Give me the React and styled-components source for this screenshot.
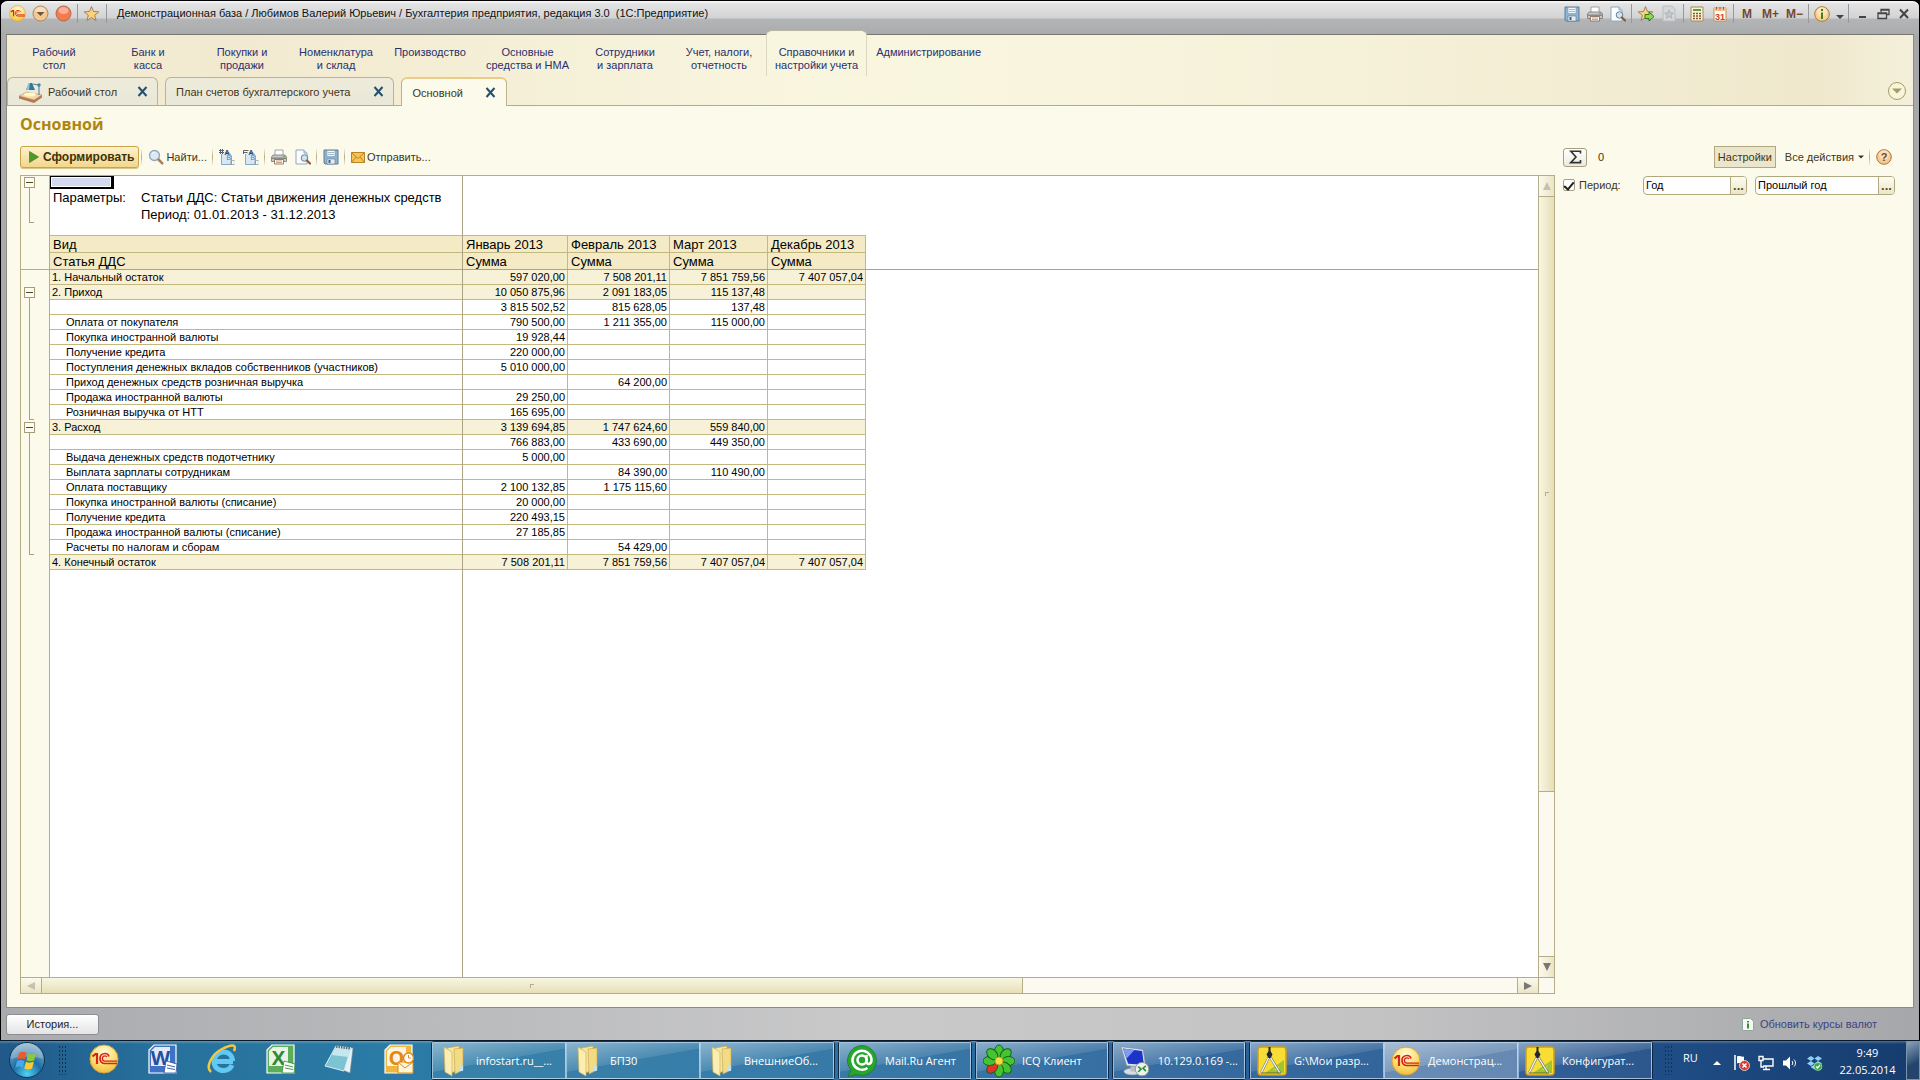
import React from 'react'
import styled, { createGlobalStyle, css } from 'styled-components'

const GlobalStyle = createGlobalStyle`
* {
  box-sizing: border-box;
}

body {
  margin: 0;
  font-family: "Liberation Sans", Arial, sans-serif;
  font-size: 11px;
  color: #3f3618;
}

button, input {
  font: inherit;
  color: inherit;
  margin: 0;
}
`

const Page = styled.div`
min-height: 100vh;
display: flex;
flex-direction: column;
background: #000;
`

const Window = styled.div`
flex: 1;
display: flex;
flex-direction: column;
margin: 1px 1px 0;
padding: 0 5px;
border-top: 2px solid #f2f2f2;
border-radius: 6px 6px 0 0;
background: linear-gradient(#e4e4e5, #d2d3d4 15px, #b4b5b7 16px, #a9aaac 32px, transparent 33px),
  linear-gradient(90deg, #a9abae, #c9c9ca 45%, #c4c4c5 70%, #a6a7aa);
`

const TitleBar = styled.header`
height: 31px;
display: flex;
align-items: flex-start;
padding: 1px 0 0 2px;
`

const TitleGroup = styled.div`
height: 19px;
display: flex;
align-items: center;
gap: ${({ gap }) => gap || 7}px;
padding: 0 ${({ end, pad }) => end === undefined ? pad || 5 : end}px 0 ${({ pad }) => pad || 5}px;
border-right: ${({ last }) => last ? 'none' : '1px solid #97989b'};
`

const TitleText = styled.div`
flex: 1;
padding-left: 10px;
font-size: 11px;
line-height: 18px;
color: #111;
white-space: pre;
`

const IconButton = styled.button`
min-width: 16px;
height: 18px;
display: flex;
align-items: center;
justify-content: center;
padding: ${({ low }) => low ? 6 : 0}px 0 0;
border: 0;
background: none;
`

const MemoryButton = styled(IconButton)`
font-size: 12px;
font-weight: bold;
color: #75472c;
`

const Client = styled.main`
flex: 1;
display: flex;
flex-direction: column;
border: 1px solid #8f8c7c;
border-top-color: #77776f;
background: #fcfaea;
`

const Ribbon = styled.div`
background: linear-gradient(90deg, #f3edd3, #f2ead0 12%, #f9f6e0 45%, #f6f1d9 70%, #efe8cd 95%, #f5f0db);
border-bottom: 1px solid #b5ad80;
height: 71px;
display: flex;
flex-direction: column;
justify-content: space-between;
`

const Sections = styled.nav`
display: flex;
height: 41px;
`

const Section = styled.a`
min-width: 94px;
height: 46px;
margin-top: -5px;
padding: 15px 8px 0;
border: 1px solid transparent;
border-bottom: 0;
line-height: 13px;
text-align: center;
text-decoration: none;
color: #28306e;
white-space: pre-line;

${({ $active }) => $active && css`
  border-radius: 6px 6px 0 0;
  border-color: #b9b7a4 #dcd9c2;
  background: linear-gradient(#f9f6e0, #f8f5de);
`}
`

const TabRow = styled.div`
display: flex;
align-items: flex-end;
gap: 7px;
padding-right: 7px;
`

const Tab = styled.div`
height: ${({ $active }) => $active ? 29 : 28}px;
margin-bottom: ${({ $active }) => $active ? -1 : 0}px;
display: flex;
align-items: center;
gap: ${({ gap }) => gap}px;
padding: 0 7px 0 10px;
border: 1px solid #b9b38f;
border-top-color: ${({ $active }) => $active ? '#eccb86' : '#b9b38f'};
border-top-width: ${({ $active }) => $active ? 2 : 1}px;
border-bottom: 0;
border-radius: 6px 6px 0 0;
background: ${({ $active }) => $active ? '#fcfaea' : 'linear-gradient(#eeebd9, #e9e8d9)'};
`

const TabLabel = styled.a`
display: flex;
align-items: center;
gap: 4px;
color: #3f3618;
text-decoration: none;
`

const TabSpacer = styled.div`
flex: 1;
`

const RoundButton = styled.button`
width: 18px;
height: 18px;
margin-bottom: 5px;
padding: 0;
display: flex;
align-items: center;
justify-content: center;
border: 1px solid #a59c62;
border-radius: 50%;
background: #f9f5da;
`

const Content = styled.div`
flex: 1;
display: flex;
flex-direction: column;
padding: 8px 18px 13px 13px;
`

const Heading = styled.h1`
margin: 0 0 12px;
font: bold 16px/20px "Open Sans", sans-serif;
color: #b0850f;
`

const Body = styled.div`
flex: 1;
display: flex;
gap: 8px;
`

const ReportPane = styled.section`
flex: 1;
min-width: 0;
display: flex;
flex-direction: column;
`

const Toolbar = styled.div`
height: 22px;
margin-bottom: 7px;
display: flex;
align-items: center;
`

const Separator = styled.div`
width: 1px;
height: 18px;
margin: 0 6px 0 ${({ left }) => left || 5}px;
background: linear-gradient(transparent, #b3ab86, transparent);
`

const RunButton = styled.button`
height: 22px;
padding: 0 4px 0 8px;
display: flex;
align-items: center;
gap: 4px;
border: 1px solid #c8a548;
border-radius: 3px;
background: linear-gradient(#fdf1cd, #f2d78c);
font-size: 12px;
font-weight: bold;
color: #3f3206;
box-shadow: 0 1px 0 #d9c58a;
`

const ToolButton = styled.button`
height: 20px;
display: flex;
align-items: center;
gap: 2px;
padding: 0;
border: 0;
background: none;
`

const MenuButton = styled(ToolButton)`
gap: 4px;
`

const ToolGap = styled.div`
width: ${({ size }) => size || 8}px;
`

const Sheet = styled.div`
flex: 1;
display: grid;
grid-template-columns: 29px minmax(0, 1fr) 16px;
grid-template-rows: minmax(0, 1fr) 16px;
border: 1px solid #b5ad88;
`

const Gutter = styled.div`
border-right: 1px solid #b5ad88;
background: #fcfaea;
`

const GutterHead = styled.div`
height: 94px;
margin-bottom: 16px;
border-bottom: 1px solid #b5ad88;
`

const OutlineGroup = styled.div`
height: ${({ size }) => size}px;
margin-bottom: 1px;
display: flex;
flex-direction: column;
`

const OutlineToggle = styled.button`
width: 11px;
height: 11px;
margin: 1px 0 0 3px;
padding: 0;
display: flex;
align-items: center;
justify-content: center;
border: 1px solid #a49d78;
background: #fffdf2;

&::before {
  content: '';
  width: 7px;
  height: 1px;
  background: #4c4522;
}
`

const OutlineLine = styled.div`
flex: 1;
width: 5px;
margin-left: 8px;
border: solid #a8a180;
border-width: 0 0 1px 1px;
`

const Cells = styled.div`
position: relative;
background: #fff;
color: #000;
`

const FreezeColumn = styled.div`
position: absolute;
top: 0;
bottom: 0;
left: 412px;
width: 1px;
background: #aaa384;
`

const FreezeRow = styled.div`
position: absolute;
left: 0;
right: 0;
top: 93px;
height: 1px;
background: #aaa384;
`

const SelectedCell = styled.div`
width: 64px;
height: 13px;
border: solid #000;
border-width: 1px 3px 2px 1px;
background: #d3d9ee;
box-shadow: inset 0 0 0 1px #fff;
`

const Params = styled.dl`
height: 46px;
margin: 0;
padding-left: 3px;
display: grid;
grid-template-columns: 88px 1fr;
grid-auto-rows: 17px;
font-size: 13px;
line-height: 17px;
`

const ParamValue = styled.dd`
margin: 0;
grid-column: 2;
`

const ReportTable = styled.table`
width: 816px;
table-layout: fixed;
border-collapse: separate;
border-spacing: 0;
border-top: 1px solid #c3b87e;
`

const HeadCell = styled.th`
height: 17px;
padding: 1px 0 0 3px;
border: solid #c3b87e;
border-width: 0 1px 1px 0;
background: #f4ebc6;
font-size: 13px;
font-weight: normal;
line-height: 15px;
text-align: left;
white-space: nowrap;
`

const Row = styled.tr`
background: ${({ $total }) => $total ? '#f7f1d8' : '#fff'};
`

const NameCell = styled.td`
height: 15px;
padding: 0 0 0 ${({ $nested }) => $nested ? 16 : 2}px;
border: solid #c3b87e;
border-width: 0 1px 1px 0;
line-height: 14px;
white-space: nowrap;
`

const SumCell = styled(NameCell)`
padding: 0 2px 0 0;
text-align: right;
`

const VScroll = styled.div`
display: flex;
flex-direction: column;
border-left: 1px solid #b5ad88;
background: #fbf9f0;
`

const HScroll = styled.div`
grid-column: 1 / 3;
display: flex;
border-top: 1px solid #b5ad88;
background: #fbf9f0;
`

const Corner = styled.div`
border: solid #b5ad88;
border-width: 1px 0 0 1px;
background: #fbf9f0;
`

const ScrollButton = styled.button`
flex: 0 0 20px;
padding: 0;
display: flex;
align-items: center;
justify-content: center;
border: 0;
background: ${({ $side }) => $side ? 'linear-gradient(#fbf9ec, #ebe5c6)' : 'linear-gradient(90deg, #fbf9ec, #ebe5c6)'};
`

const VThumb = styled.div`
flex: 596;
border: solid #b5ad88;
border-width: 1px 0;
background: linear-gradient(90deg, #f9f6e2, #e6dfb8);
display: flex;
align-items: center;
justify-content: center;
`

const HThumb = styled.div`
flex: 981;
border: solid #b5ad88;
border-width: 0 1px;
background: linear-gradient(#f9f6e2, #e6dfb8);
display: flex;
align-items: center;
justify-content: center;
`

const Grip = styled.div`
width: 4px;
height: 4px;
border: solid #b5ad88;
border-width: 1px 0 0 1px;
`

const VTrack = styled.div`
flex: 164;
border-bottom: 1px solid #b5ad88;
`

const HTrack = styled.div`
flex: 495;
border-right: 1px solid #b5ad88;
`

const SettingsPane = styled.aside`
width: 332px;
`

const SumButton = styled.button`
width: 24px;
height: 19px;
padding: 0;
display: flex;
align-items: center;
justify-content: center;
border: 1px solid #a69f86;
border-radius: 3px;
background: linear-gradient(#fff, #eceadd);
`

const SumValue = styled.output`
flex: 1;
padding-left: 11px;
`

const SettingsButton = styled.button`
width: 62px;
height: 22px;
margin-right: 9px;
padding: 0;
border: 1px solid #b0a97f;
background: #ebe6cb;
`

const Filter = styled.div`
display: flex;
align-items: center;
gap: 8px;
height: 20px;
`

const PeriodLabel = styled.label`
width: 72px;
display: flex;
align-items: center;
gap: 4px;
`

const CheckBox = styled.input`
appearance: none;
width: 12px;
height: 12px;
border: 1px solid #a69f86;
border-radius: 2px;
background: #fff;
display: flex;
justify-content: center;

&:checked::before {
  content: '';
  width: 4px;
  height: 8px;
  border: solid #222;
  border-width: 0 2px 2px 0;
  transform: rotate(40deg);
}
`

const Field = styled.div`
flex: 0 0 ${({ size }) => size}px;
height: 19px;
display: flex;
border: 1px solid #b0a97f;
border-radius: 4px;
background: #fff;
overflow: hidden;
`

const FieldInput = styled.input`
flex: 1;
min-width: 0;
padding: 0 2px;
border: 0;
background: none;
color: #000;
outline: none;
`

const FieldButton = styled.button`
width: 16px;
padding: 0;
border: 0;
border-left: 1px solid #b0a97f;
background: linear-gradient(#fdfcf2, #ebe6cb);
font-size: 13px;
font-weight: bold;
line-height: 17px;
color: #5c4f14;
`

const StatusBar = styled.footer`
height: 32px;
display: flex;
align-items: center;
justify-content: space-between;
padding-right: 37px;
`

const HistoryButton = styled.button`
width: 93px;
height: 21px;
border: 1px solid #8d8e90;
border-radius: 3px;
background: linear-gradient(#fff, #e4e4e6);
color: #222;
`

const StatusLink = styled.a`
display: flex;
align-items: center;
gap: 6px;
color: #3c4384;
text-decoration: none;
`

const Taskbar = styled.footer`
height: 40px;
display: flex;
border-top: 1px solid #0b1a2a;
background: linear-gradient(rgba(255, 255, 255, 0.25), rgba(255, 255, 255, 0) 3px),
  linear-gradient(90deg, #20598a, #27709c 8%, #2a7ba5 20%, #2b74a4 40%, #2a649b 60%, #235590 80%, #163c6e);
font-family: "Open Sans", sans-serif;
font-size: 11px;
color: #fff;
`

const StartButton = styled.button`
width: 54px;
padding: 0;
border: 0;
background: none;
`

const Dots = styled.div`
width: 9px;
height: 30px;
margin: 4px 0 0 ${({ left }) => left}px;
background: radial-gradient(circle, #0d3552 1px, transparent 1px) 0 0 / 3px 4px;
`

const QuickLaunch = styled.div`
display: flex;
align-items: center;
padding: 0 3px 0 7px;
`

const LaunchButton = styled.button`
width: 59px;
height: 36px;
padding: 0;
border: 0;
background: none;
`

const TaskGroup = styled.div`
display: flex;
margin-right: 3px;
border: 1px solid rgba(10, 25, 45, 0.8);
border-radius: 3px;
`

const TaskButton = styled.button`
width: ${({ size }) => size || 132}px;
display: flex;
align-items: center;
gap: 7px;
padding: 0 6px;
border: 1px solid rgba(220, 235, 250, 0.6);
background: ${({ $active }) => $active
    ? 'linear-gradient(170deg, rgba(255,255,255,.6), rgba(255,255,255,.4) 50%, rgba(255,255,255,.3) 51%)'
    : 'linear-gradient(170deg, rgba(255,255,255,.45), rgba(255,255,255,.16) 49%, rgba(255,255,255,.06) 50%)'};
white-space: nowrap;
text-align: left;
`

const Tray = styled.div`
flex: 1;
display: flex;
align-items: center;
`

const TrayIcons = styled.div`
display: flex;
align-items: center;
gap: 8px;
margin: 4px 0 0 10px;
`

const TrayArrow = styled.div`
width: 12px;
display: flex;
`

const Language = styled.div`
width: 20px;
margin-left: 10px;
padding-bottom: 6px;
`

const Clock = styled.time`
flex: 1;
padding: 1px 0 0 6px;
line-height: 17px;
text-align: center;
`

const ShowDesktop = styled.button`
width: 14px;
height: 39px;
border: 1px solid #7d93ab;
background: linear-gradient(150deg, #8ba2bb, #23456c 60%);
`

/* icons */

const DiskIcon = () => (
  <svg width='16' height='16' viewBox='0 0 16 16'>
    <path d='M1 1h14v14H2l-1-1z' fill='#8fb4cf' stroke='#5c7d98' />
    <path d='M4 1.500h8v6H4z' fill='#f4f8fb' stroke='#7d98ad' strokeWidth='.6' />
    <path d='M5 3.500h6M5 5.500h6' stroke='#a5bac9' />
    <path d='M4 10h8v5H4z' fill='#e5edf2' stroke='#5c7d98' strokeWidth='.6' />
    <path d='M5.500 11h2v3h-2z' fill='#41617c' />
  </svg>
)

const PrinterIcon = () => (
  <svg width='16' height='16' viewBox='0 0 16 16'>
    <path d='M4 1h8v6H4z' fill='#fff' stroke='#8b9097' strokeWidth='.8' />
    <path d='M2 6h12l1.500 2v4.500h-15V8z' fill='#c9c8c6' stroke='#7a7673' strokeWidth='.8' />
    <path d='M1 8.500h14v1.500H1z' fill='#8d8783' />
    <path d='M12 7h2v1h-2z' fill='#67b04c' />
    <path d='M3.500 10.500h9v4.500h-9z' fill='#fbfbfb' stroke='#7c6657' strokeWidth='.8' />
    <path d='M5 12h6M5 13.500h6' stroke='#c88e60' strokeWidth='.8' />
  </svg>
)

const PreviewIcon = () => (
  <svg width='16' height='16' viewBox='0 0 16 16'>
    <path d='M1 1h8l3 3v11H1z' fill='#fbfdff' stroke='#8ba9c1' />
    <path d='M9 1v3h3' fill='#d4e3ef' stroke='#8ba9c1' />
    <circle cx='9.500' cy='9' r='3.300' fill='#cfe2f0' stroke='#6a7f90' />
    <path d='M12 11.500l3 3' stroke='#8a5a3c' strokeWidth='2.200' strokeLinecap='round' />
  </svg>
)

const StarIcon = ({ arrow, pale }) => (
  <svg width='18' height='17' viewBox='0 0 18 17'>
    {pale && <path d='M3 1h9l3 3v12H3z' fill='#d5d7d9' stroke='#b8bdc2' />}
    <path
      d='M8.500 1.500l2 5 5.300.4-4.100 3.400 1.400 5.200-4.600-2.900-4.500 2.900 1.300-5.200L1.200 6.900l5.300-.4z'
      transform={pale ? 'translate(4 4) scale(.6)' : undefined}
      fill={pale ? '#c3c8cc' : '#fbd27c'}
      stroke={pale ? '#9aa2a9' : '#9c8163'}
    />
    {arrow && <path d='M8 9.500h4V7l5 4.500-5 4.500v-2.500H8z' fill='#8ddb58' stroke='#357a1e' />}
  </svg>
)

const CalcIcon = () => (
  <svg width='14' height='16' viewBox='0 0 14 16'>
    <path d='M1 1h12v14H1z' fill='#fbf3d4' stroke='#a08a5a' />
    <path d='M3 3h8v2H3z' fill='#5f9a46' />
    <path d='M3 7.500h8M3 10h8M3 12.500h8' stroke='#8a5136' strokeWidth='1.500' strokeDasharray='2 1' />
  </svg>
)

const CalendarIcon = () => (
  <svg width='14' height='16' viewBox='0 0 14 16'>
    <path d='M1 2h12v13H1z' fill='#fffaf0' stroke='#c58f56' />
    <path d='M1 2h12v3H1z' fill='#eec193' />
    <path d='M3.500 1v2.500M7 1v2.500M10.500 1v2.500' stroke='#8f5b2b' />
    <text x='7' y='13.500' fontSize='9' fontWeight='bold' fontFamily='Liberation Sans' textAnchor='middle' fill='#d6401c'>31</text>
  </svg>
)

const InfoIcon = () => (
  <svg width='16' height='16' viewBox='0 0 16 16'>
    <circle cx='8' cy='8' r='7.300' fill='#f8d28a' stroke='#a7793f' />
    <circle cx='8' cy='6' r='5' fill='#fff' opacity='.4' />
    <path d='M7 3h2v2H7zM7 6.500h2V13H7z' fill='#4c7a21' />
  </svg>
)

const HelpIcon = () => (
  <svg width='16' height='16' viewBox='0 0 16 16'>
    <circle cx='8' cy='8' r='7.300' fill='#f8c98a' stroke='#a7744a' />
    <circle cx='8' cy='6' r='5' fill='#fff' opacity='.4' />
    <text x='8' y='12' fontSize='11' fontWeight='bold' fontFamily='Liberation Sans' textAnchor='middle' fill='#6b4a2c'>?</text>
  </svg>
)

const OneCIcon = ({ size }) => (
  <svg width={size} height={size} viewBox='0 0 30 30'>
    <defs>
      <radialGradient id='oneC' cx='50%' cy='25%' r='80%'>
        <stop offset='0' stopColor='#fffbd8' />
        <stop offset='.6' stopColor='#fbdc6a' />
        <stop offset='1' stopColor='#f0b93a' />
      </radialGradient>
    </defs>
    <circle cx='15' cy='15' r='14' fill='url(#oneC)' stroke='#d9a33c' />
    <path d='M3.500 12.500l3-2.500h1.500v10' fill='none' stroke='#d8231b' strokeWidth='2.200' />
    <path d='M20 12.500c-.5-2-2-3-4-3-3 0-5 2.200-5 5s2 5 5 5h12' fill='none' stroke='#d8231b' strokeWidth='1.700' />
    <path d='M18 13c-.5-.8-1-1.200-2-1.200-1.600 0-2.600 1.200-2.600 2.700s1 2.600 2.600 2.600h12' fill='none' stroke='#d8231b' strokeWidth='1.300' />
  </svg>
)

const RoundIcon = ({ color, edge, arrow }) => (
  <svg width='17' height='17' viewBox='0 0 17 17'>
    <circle cx='8.500' cy='8.500' r='7.500' fill={color} stroke={edge} />
    <ellipse cx='8.500' cy='5.500' rx='5' ry='3.500' fill='#fff' opacity='.4' />
    {arrow && <path d='M4.500 7h8l-4 4z' fill='#6d5440' />}
  </svg>
)

const Triangle = ({ dir, color = '#777', size = 8 }) => {
  const shapes = {
    up: 'M4 0l4 8H0z',
    down: 'M0 0h8L4 8z',
    left: 'M8 0v8L0 4z',
    right: 'M0 0l8 4-8 4z',
    flat: 'M0 2h8L4 6z',
    caret: 'M0 6h8L4 2z'
  }
  return (
    <svg width={size} height={size} viewBox='0 0 8 8'>
      <path d={shapes[dir]} fill={color} />
    </svg>
  )
}

const CloseIcon = () => (
  <svg width='11' height='11' viewBox='0 0 11 11'>
    <path d='M1.500 1l8 9M9.500 1l-8 9' stroke='#23506e' strokeWidth='2' />
  </svg>
)

const DeskIcon = () => (
  <svg width='26' height='22' viewBox='0 0 26 22'>
    <path d='M1 15l8-4 15 3-8 5z' fill='#f3d7a8' stroke='#c18d5c' strokeWidth='.6' />
    <path d='M1 15l15 4v3L1 17.500zM16 19l8-5v2.500L16 22z' fill='#b67a52' />
    <ellipse cx='12' cy='13.500' rx='6' ry='2' fill='#fffbc9' />
    <path d='M8 9l3-7h3l3 7z' fill='#2d7a9c' />
    <path d='M8 9l3-7h1l-1 7z' fill='#8ac4da' />
    <path d='M14 3l7 1v10' fill='none' stroke='#5e8ba1' strokeWidth='1.200' />
    <circle cx='21' cy='4' r='1.700' fill='#3f86a8' />
  </svg>
)

const SearchIcon = () => (
  <svg width='16' height='16' viewBox='0 0 16 16'>
    <circle cx='6.500' cy='6.500' r='5' fill='#d9e9f5' stroke='#93a6bb' strokeWidth='1.300' />
    <path d='M4 5c.5-1.200 1.500-1.800 2.500-1.800' stroke='#fff' fill='none' />
    <path d='M10.500 10.500l3.800 3.800' stroke='#a4805f' strokeWidth='2.500' strokeLinecap='round' />
  </svg>
)

const LettersIcon = ({ outline }) => (
  <svg width='16' height='16' viewBox='0 0 16 16'>
    <path d='M2.500 5V15.500h10V7L10 3.500H6' fill='#d6e8f5' stroke='#86aac4' />
    <path d={outline ? 'M.5 5V1.500h5M.5 3.500h4' : 'M0 1.500h5M0 3.500h5M1.500 0v5M3.500 0v5'} stroke='#59636b' fill='none' />
    <text x='5.500' y='6' fontSize='7' fontWeight='bold' fontFamily='Liberation Sans' fill='#1e4a70'>A</text>
    <text x='7.500' y='11' fontSize='7' fontFamily='Liberation Sans' fill='#55809c'>B</text>
    <text x='11' y='16' fontSize='7' fontFamily='Liberation Sans' fill='#7c8b95'>C</text>
  </svg>
)

const MailIcon = () => (
  <svg width='14' height='11' viewBox='0 0 14 11'>
    <path d='M.5.5h13v10H.5z' fill='#f8c455' stroke='#b98428' />
    <path d='M.5.5L7 6.500 13.500.5M.5 10.500L5 5M13.500 10.500L9 5' fill='none' stroke='#b98428' />
  </svg>
)

const SigmaIcon = () => (
  <svg width='13' height='14' viewBox='0 0 13 14'>
    <path d='M11.500 3.500V1.200H1.800L7 7l-5.200 5.600h9.700V10' fill='none' stroke='#333' strokeWidth='1.600' />
  </svg>
)

const WindowIcon = ({ kind }) => (
  <svg width='13' height='12' viewBox='0 0 13 12'>
    {kind === 'min' && <path d='M3 9h7' stroke='#444' strokeWidth='2' />}
    {kind === 'restore' && <path d='M4 4V1.500h8v5H9.500M1 5h8.500v5.500H1zM1 5.500h8M4 2h8' fill='none' stroke='#444' strokeWidth='1.300' />}
    {kind === 'close' && <path d='M2 1.500l8 8.500M10 1.500L2 10' stroke='#444' strokeWidth='2' />}
  </svg>
)

const NoteIcon = () => (
  <svg width='12' height='13' viewBox='0 0 12 13'>
    <path d='M.5.5h8l3 3v9H.5z' fill='#f4faf3' stroke='#92a79b' />
    <path d='M5 3h2v1.500H5zM5 5.500h2v5H5z' fill='#3f8a33' />
  </svg>
)

const StartOrb = () => (
  <svg width='38' height='38' viewBox='0 0 38 38'>
    <defs>
      <radialGradient id='orb' cx='50%' cy='90%' r='90%'>
        <stop offset='0' stopColor='#4fd2f5' />
        <stop offset='.45' stopColor='#1c6fa5' />
        <stop offset='1' stopColor='#8fb4cc' />
      </radialGradient>
    </defs>
    <circle cx='19' cy='19' r='17.500' fill='url(#orb)' stroke='#12354f' />
    <path d='M3 18a16 16 0 0 1 32 0c-8-3-22-3-32 0z' fill='#fff' opacity='.25' />
    <path d='M11 12c3-1.800 5-1.500 7.500-.3l-1.700 6.800c-2.500-1.200-5-1.300-7.500.2z' fill='#ee5a2c' />
    <path d='M20 12.500c2.500 1.300 5 1.300 8-.3l-1.800 7c-2.700 1.400-5.200 1.300-7.800 0z' fill='#8cc83c' />
    <path d='M9 20c2.800-1.500 5-1.300 7.500-.2l-1.700 6.700c-2.500-1.200-5-1.200-7.500.2z' fill='#48a8e8' />
    <path d='M18 20.800c2.500 1.200 5 1.200 7.900-.2l-1.800 6.900c-2.800 1.400-5.200 1.300-7.800 0z' fill='#fcc92e' />
  </svg>
)

const OfficeIcon = ({ letter, color, edge }) => (
  <svg width='30' height='30' viewBox='0 0 30 30'>
    <path d='M6 1h22v28H1V6z' fill={edge} stroke='#fff' strokeWidth='1.200' />
    <path d='M7 3h15v19H3V7z' fill='#fff' opacity='.85' />
    <text x='12.500' y='21' fontSize='20' fontWeight='bold' fontFamily='Open Sans' textAnchor='middle' fill={color}>{letter}</text>
    {letter === 'O'
      ? <g><path d='M14 18h15v11H14z' fill='#fff6d8' stroke={color} /><path d='M14 18l7 6 8-6' fill='none' stroke={color} /><circle cx='24.500' cy='14' r='5' fill='#fff' stroke={color} strokeWidth='1.500' /><path d='M24.500 11v3h2.500' fill='none' stroke={color} /></g>
      : <g><path d='M18 17l11 3-1 9H16z' fill='#fff' stroke={color} strokeWidth='.8' /><path d='M19 21l8 2M19 24l8 1.500' stroke={color} strokeWidth='.9' /></g>}
  </svg>
)

const ExplorerIcon = () => (
  <svg width='32' height='32' viewBox='0 0 32 32'>
    <path d='M27 18.500H9M26.500 18c0-5.500-4-9-9-9s-9.500 4-9.500 9.500 4 9 9.500 9c4 0 7-2 8.500-5.500' fill='none' stroke='#62c9f3' strokeWidth='5' />
    <path d='M5 29C-1 24 6 11 16 6S31 1 28 8' fill='none' stroke='#f4ca3a' strokeWidth='2.500' />
  </svg>
)

const NotepadIcon = () => (
  <svg width='32' height='30' viewBox='0 0 32 30'>
    <path d='M12 2l17 2-3 25-5-2z' fill='#e8f1f3' stroke='#7b8e96' strokeWidth='.6' />
    <path d='M12 2l15 2-7 23L1 22z' fill='#7cc3d4' stroke='#d8eef2' />
    <path d='M12 2l15 2-3 9L8 11z' fill='#c5e8ef' />
    <path d='M12 2.500l15 2' stroke='#5d6b70' strokeWidth='2.500' strokeDasharray='1.500 1' />
  </svg>
)

const FolderIcon = () => (
  <svg width='30' height='34' viewBox='0 0 30 34'>
    <path d='M8 4l12-2v24l-8 3z' fill='#f6e6a0' stroke='#c9ab50' strokeWidth='.7' />
    <path d='M15 5l9-1v22l-8 4z' fill='#f3da85' stroke='#c9ab50' strokeWidth='.7' />
    <path d='M5 3l8 5v24l-7-4z' fill='#fbeeb0' stroke='#cfb25a' strokeWidth='.7' />
    <path d='M21 22h3v5h-3z' fill='#bfe2f5' />
  </svg>
)

const MailRuIcon = () => (
  <svg width='32' height='34' viewBox='0 0 32 34'>
    <path d='M16 1.500a15 15 0 1 1-6 29L2 32.500l3-6.500A15 15 0 0 1 16 1.500z' fill='#27a52f' stroke='#16761d' strokeWidth='.7' />
    <circle cx='16' cy='16' r='4.500' fill='none' stroke='#fff' strokeWidth='2.500' />
    <path d='M20.500 11v6.500c0 4 5 3 5-1.500a9.500 9.500 0 1 0-4 8' fill='none' stroke='#fff' strokeWidth='2.500' />
  </svg>
)

const IcqIcon = () => (
  <svg width='32' height='34' viewBox='0 0 32 34'>
    {[0, 45, 90, 135, 180, 225, 270, 315].map(angle => (
      <ellipse
        key={angle}
        cx='16'
        cy='7.500'
        rx='4.500'
        ry='6.500'
        transform={`rotate(${angle} 16 17)`}
        fill={angle === 225 ? '#e2322b' : '#45c331'}
        stroke='#14631a'
      />
    ))}
    <circle cx='16' cy='17' r='4' fill='#fbd843' stroke='#a88516' strokeWidth='.6' />
  </svg>
)

const RemoteIcon = () => (
  <svg width='32' height='34' viewBox='0 0 32 34'>
    <ellipse cx='13' cy='28' rx='9' ry='3.500' fill='#d8dde2' stroke='#8c97a0' strokeWidth='.6' />
    <path d='M11 22h6v6h-6z' fill='#b6bfc6' />
    <path d='M1 2l23 3 3 18-20-1z' fill='#dfe6ec' stroke='#7f8b95' strokeWidth='.6' />
    <path d='M3 4l20 2.500 2 14.500-16.500-1z' fill='#1c35c8' />
    <path d='M3 4l12 1.500-8 9z' fill='#7f9bf0' />
    <circle cx='23' cy='25.500' r='7' fill='#eef1ee' stroke='#8d9a90' />
    <path d='M19 23l3 2.500-3 3M27 22l-3 2.500 3 3' fill='none' stroke='#2f8f3c' strokeWidth='1.700' />
  </svg>
)

const CompassIcon = () => (
  <svg width='30' height='32' viewBox='0 0 30 32'>
    <rect x='1' y='2' width='28' height='28' rx='3' fill='#f8dd35' stroke='#cf9d1d' strokeWidth='1.500' />
    <path d='M27 15v13H8z' fill='#9dc534' />
    <path d='M22 21v4h-5z' fill='#f8dd35' />
    <path d='M12.500 11L4 28M12.500 11L23 28' stroke='#6b6f73' strokeWidth='2.400' />
    <path d='M12.500 11L4 28M12.500 11L23 28' stroke='#f4f5f6' strokeWidth='1.400' />
    <path d='M4 28h20' stroke='#4b5524' strokeWidth='.8' />
    <path d='M11.500 2h2v4l2 3.500-2 3.500h-2l-2-3.500 2-3.500z' fill='#24282c' />
  </svg>
)

const FlagIcon = () => (
  <svg width='17' height='17' viewBox='0 0 17 17'>
    <path d='M2 1v15' stroke='#fff' strokeWidth='1.500' />
    <path d='M4 2.500c3-1.500 4 1 7 0v7c-3 1-4-1.500-7 0z' fill='#fff' />
    <circle cx='11.500' cy='11.500' r='5' fill='#dc3a2f' stroke='#fff' strokeWidth='.7' />
    <path d='M9.500 9.500l4 4M13.500 9.500l-4 4' stroke='#fff' strokeWidth='1.600' />
  </svg>
)

const NetworkIcon = () => (
  <svg width='16' height='16' viewBox='0 0 16 16'>
    <path d='M5 4h10v7H5M8 11v3M5 14.500h7M1 1.500h4v4H1zM3 5.500V12h3' fill='none' stroke='#fff' strokeWidth='1.400' />
  </svg>
)

const SoundIcon = () => (
  <svg width='16' height='16' viewBox='0 0 16 16'>
    <path d='M1 5.500h3l4-4v13l-4-4H1z' fill='#fff' />
    <path d='M10 6c1 1.200 1 2.800 0 4M12 4.500c2 2.200 2 4.800 0 7' fill='none' stroke='#fff' />
  </svg>
)

const DropboxIcon = () => (
  <svg width='17' height='16' viewBox='0 0 17 16'>
    <path d='M5 1l3.500 2.500L5 6 1 3.500zM12 1l4 2.500L12 6 8.500 3.500zM5 6l3.500 2.500L5 11 1 8.500zM12 6l4 2.500-4 2.500-3.500-2.500zM4.500 12l4-2.500 4 2.500-4 2.500z' fill='#8fd0f7' />
    <circle cx='12' cy='11.500' r='4' fill='#39a744' stroke='#c9efc9' strokeWidth='.6' />
    <path d='M10 11.500l1.500 1.500 2.500-3' fill='none' stroke='#fff' strokeWidth='1.300' />
  </svg>
)

const PlayIcon = () => (
  <svg width='10' height='12' viewBox='0 0 10 12'>
    <path d='M.5.5L9.500 6l-9 5.500z' fill='#4a9a2c' stroke='#2f6e1c' strokeWidth='.6' />
  </svg>
)

/* data */

const sections = [
  'Рабочий\nстол',
  'Банк и\nкасса',
  'Покупки и\nпродажи',
  'Номенклатура\nи склад',
  'Производство',
  'Основные\nсредства и НМА',
  'Сотрудники\nи зарплата',
  'Учет, налоги,\nотчетность',
  'Справочники и\nнастройки учета',
  'Администрирование'
]

const months = ['Январь 2013', 'Февраль 2013', 'Март 2013', 'Декабрь 2013']

const rows = [
  { name: '1. Начальный остаток', total: true, sums: ['597 020,00', '7 508 201,11', '7 851 759,56', '7 407 057,04'] },
  { name: '2. Приход', total: true, sums: ['10 050 875,96', '2 091 183,05', '115 137,48', ''] },
  { name: '', sums: ['3 815 502,52', '815 628,05', '137,48', ''] },
  { name: 'Оплата от покупателя', sums: ['790 500,00', '1 211 355,00', '115 000,00', ''] },
  { name: 'Покупка иностранной валюты', sums: ['19 928,44', '', '', ''] },
  { name: 'Получение кредита', sums: ['220 000,00', '', '', ''] },
  { name: 'Поступления денежных вкладов собственников (участников)', sums: ['5 010 000,00', '', '', ''] },
  { name: 'Приход денежных средств розничная выручка', sums: ['', '64 200,00', '', ''] },
  { name: 'Продажа иностранной валюты', sums: ['29 250,00', '', '', ''] },
  { name: 'Розничная выручка от НТТ', sums: ['165 695,00', '', '', ''] },
  { name: '3. Расход', total: true, sums: ['3 139 694,85', '1 747 624,60', '559 840,00', ''] },
  { name: '', sums: ['766 883,00', '433 690,00', '449 350,00', ''] },
  { name: 'Выдача денежных средств подотчетнику', sums: ['5 000,00', '', '', ''] },
  { name: 'Выплата зарплаты сотрудникам', sums: ['', '84 390,00', '110 490,00', ''] },
  { name: 'Оплата поставщику', sums: ['2 100 132,85', '1 175 115,60', '', ''] },
  { name: 'Покупка иностранной валюты (списание)', sums: ['20 000,00', '', '', ''] },
  { name: 'Получение кредита', sums: ['220 493,15', '', '', ''] },
  { name: 'Продажа иностранной валюты (списание)', sums: ['27 185,85', '', '', ''] },
  { name: 'Расчеты по налогам и сборам', sums: ['', '54 429,00', '', ''] },
  { name: '4. Конечный остаток', total: true, sums: ['7 508 201,11', '7 851 759,56', '7 407 057,04', '7 407 057,04'] }
]

const WindowTitle = () => (
  <TitleBar>
    <TitleGroup pad={1} gap={6} end={5}>
      <IconButton aria-label='Главное меню'><OneCIcon size={17} /></IconButton>
      <IconButton aria-label='Меню'><RoundIcon color='#f3c992' edge='#a98766' arrow /></IconButton>
      <IconButton aria-label='Закрыть'><RoundIcon color='#f47a50' edge='#b56848' /></IconButton>
    </TitleGroup>
    <TitleGroup>
      <IconButton aria-label='Избранное'><StarIcon /></IconButton>
    </TitleGroup>
    <TitleText>Демонстрационная база / Любимов Валерий Юрьевич / Бухгалтерия предприятия, редакция 3.0  (1С:Предприятие)</TitleText>
    <TitleGroup>
      <IconButton aria-label='Сохранить'><DiskIcon /></IconButton>
      <IconButton aria-label='Печать'><PrinterIcon /></IconButton>
      <IconButton aria-label='Просмотр'><PreviewIcon /></IconButton>
    </TitleGroup>
    <TitleGroup gap={5}>
      <IconButton aria-label='Добавить в избранное'><StarIcon arrow /></IconButton>
      <IconButton aria-label='Страница'><StarIcon pale /></IconButton>
    </TitleGroup>
    <TitleGroup>
      <IconButton aria-label='Калькулятор'><CalcIcon /></IconButton>
      <IconButton aria-label='Календарь'><CalendarIcon /></IconButton>
    </TitleGroup>
    <TitleGroup>
      <MemoryButton>M</MemoryButton>
      <MemoryButton>M+</MemoryButton>
      <MemoryButton>M−</MemoryButton>
    </TitleGroup>
    <TitleGroup gap={2} end={0}>
      <IconButton aria-label='О программе'><InfoIcon /></IconButton>
      <IconButton low aria-label='Ещё'><Triangle dir='flat' color='#444' /></IconButton>
    </TitleGroup>
    <TitleGroup last gap={5} end={2}>
      <IconButton aria-label='Свернуть'><WindowIcon kind='min' /></IconButton>
      <IconButton aria-label='Развернуть'><WindowIcon kind='restore' /></IconButton>
      <IconButton aria-label='Закрыть окно'><WindowIcon kind='close' /></IconButton>
    </TitleGroup>
  </TitleBar>
)

const Report = () => (
  <Sheet>
    <Gutter>
      <GutterHead>
        <OutlineGroup size={47}><OutlineToggle aria-label='Свернуть' /><OutlineLine /></OutlineGroup>
      </GutterHead>
      <OutlineGroup size={134}><OutlineToggle aria-label='Свернуть приход' /><OutlineLine /></OutlineGroup>
      <OutlineGroup size={134}><OutlineToggle aria-label='Свернуть расход' /><OutlineLine /></OutlineGroup>
    </Gutter>
    <Cells>
      <SelectedCell />
      <Params>
        <dt>Параметры:</dt>
        <ParamValue>Статьи ДДС: Статьи движения денежных средств</ParamValue>
        <ParamValue>Период: 01.01.2013 - 31.12.2013</ParamValue>
      </Params>
      <ReportTable>
        <colgroup>
          <col width='413' />
          <col width='105' />
          <col width='102' />
          <col width='98' />
          <col width='98' />
        </colgroup>
        <thead>
          <tr>
            <HeadCell>Вид</HeadCell>
            {months.map(month => <HeadCell key={month}>{month}</HeadCell>)}
          </tr>
          <tr>
            <HeadCell>Статья ДДС</HeadCell>
            {months.map(month => <HeadCell key={month}>Сумма</HeadCell>)}
          </tr>
        </thead>
        <tbody>
          {rows.map((row, i) => (
            <Row key={i} $total={row.total}>
              <NameCell $nested={!row.total}>{row.name}</NameCell>
              {row.sums.map((sum, j) => <SumCell key={j}>{sum}</SumCell>)}
            </Row>
          ))}
        </tbody>
      </ReportTable>
      <FreezeColumn />
      <FreezeRow />
    </Cells>
    <VScroll>
      <ScrollButton aria-label='Вверх'><Triangle dir='up' color='#c4c1ae' /></ScrollButton>
      <VThumb><Grip /></VThumb>
      <VTrack />
      <ScrollButton aria-label='Вниз'><Triangle dir='down' /></ScrollButton>
    </VScroll>
    <HScroll>
      <ScrollButton $side aria-label='Влево'><Triangle dir='left' color='#c4c1ae' /></ScrollButton>
      <HThumb><Grip /></HThumb>
      <HTrack />
      <ScrollButton $side aria-label='Вправо'><Triangle dir='right' /></ScrollButton>
    </HScroll>
    <Corner />
  </Sheet>
)

const Settings = () => (
  <SettingsPane>
    <Toolbar>
      <SumButton aria-label='Сумма'><SigmaIcon /></SumButton>
      <SumValue>0</SumValue>
      <SettingsButton>Настройки</SettingsButton>
      <MenuButton>Все действия<Triangle dir='flat' color='#3f3618' size={6} /></MenuButton>
      <Separator />
      <IconButton aria-label='Справка'><HelpIcon /></IconButton>
      <ToolGap size={3} />
    </Toolbar>
    <Filter>
      <PeriodLabel><CheckBox type='checkbox' defaultChecked />Период:</PeriodLabel>
      <Field size={104}>
        <FieldInput aria-label='Вид периода' defaultValue='Год' />
        <FieldButton aria-label='Выбрать вид периода'>...</FieldButton>
      </Field>
      <Field size={140}>
        <FieldInput aria-label='Значение периода' defaultValue='Прошлый год' />
        <FieldButton aria-label='Выбрать период'>...</FieldButton>
      </Field>
    </Filter>
  </SettingsPane>
)

const WindowsTaskbar = () => (
  <Taskbar>
    <StartButton aria-label='Пуск'><StartOrb /></StartButton>
    <Dots left={4} />
    <QuickLaunch>
      <LaunchButton aria-label='1С'><OneCIcon size={30} /></LaunchButton>
      <LaunchButton aria-label='Word'><OfficeIcon letter='W' color='#2450a4' edge='#3f72c4' /></LaunchButton>
      <LaunchButton aria-label='Internet Explorer'><ExplorerIcon /></LaunchButton>
      <LaunchButton aria-label='Excel'><OfficeIcon letter='X' color='#2f8a35' edge='#5bad57' /></LaunchButton>
      <LaunchButton aria-label='Блокнот'><NotepadIcon /></LaunchButton>
      <LaunchButton aria-label='Outlook'><OfficeIcon letter='O' color='#e08a14' edge='#f3b63c' /></LaunchButton>
    </QuickLaunch>
    <TaskGroup>
      <TaskButton size={134}><FolderIcon />infostart.ru__...</TaskButton>
      <TaskButton size={134}><FolderIcon />БП30</TaskButton>
      <TaskButton size={134}><FolderIcon />ВнешниеОб...</TaskButton>
    </TaskGroup>
    <TaskGroup><TaskButton><MailRuIcon />Mail.Ru Агент</TaskButton></TaskGroup>
    <TaskGroup><TaskButton><IcqIcon />ICQ Клиент</TaskButton></TaskGroup>
    <TaskGroup><TaskButton><RemoteIcon />10.129.0.169 -...</TaskButton></TaskGroup>
    <TaskGroup>
      <TaskButton size={134}><CompassIcon />G:\Мои разр...</TaskButton>
      <TaskButton size={134} $active><OneCIcon size={30} />Демонстрац...</TaskButton>
      <TaskButton size={134}><CompassIcon />Конфигурат...</TaskButton>
    </TaskGroup>
    <Dots left={8} />
    <Tray>
      <Language>RU</Language>
      <TrayIcons>
        <TrayArrow><Triangle dir='caret' color='#fff' /></TrayArrow>
        <FlagIcon />
        <NetworkIcon />
        <SoundIcon />
        <DropboxIcon />
      </TrayIcons>
      <Clock>9:49<br />22.05.2014</Clock>
      <ShowDesktop aria-label='Показать рабочий стол' />
    </Tray>
  </Taskbar>
)

export default function App () {
  return (
    <Page>
      <GlobalStyle />
      <Window>
        <WindowTitle />
        <Client>
          <Ribbon>
            <Sections>
              {sections.map((name, i) => <Section key={name} href='#' $active={i === 8}>{name}</Section>)}
            </Sections>
            <TabRow>
              <Tab gap={17}>
                <TabLabel href='#'><DeskIcon />Рабочий стол</TabLabel>
                <IconButton aria-label='Закрыть вкладку'><CloseIcon /></IconButton>
              </Tab>
              <Tab gap={20}>
                <TabLabel href='#'>План счетов бухгалтерского учета</TabLabel>
                <IconButton aria-label='Закрыть вкладку'><CloseIcon /></IconButton>
              </Tab>
              <Tab $active gap={20}>
                <TabLabel href='#'>Основной</TabLabel>
                <IconButton aria-label='Закрыть вкладку'><CloseIcon /></IconButton>
              </Tab>
              <TabSpacer />
              <RoundButton aria-label='Показать панель'><Triangle dir='flat' color='#a59c62' size={10} /></RoundButton>
            </TabRow>
          </Ribbon>
          <Content>
            <Heading>Основной</Heading>
            <Body>
              <ReportPane>
                <Toolbar>
                  <RunButton><PlayIcon />Сформировать</RunButton>
                  <Separator left={2} />
                  <ToolButton><SearchIcon />Найти...</ToolButton>
                  <Separator />
                  <ToolButton aria-label='Развернуть группы'><LettersIcon /></ToolButton>
                  <ToolGap />
                  <ToolButton aria-label='Свернуть группы'><LettersIcon outline /></ToolButton>
                  <Separator />
                  <ToolButton aria-label='Печать'><PrinterIcon /></ToolButton>
                  <ToolGap />
                  <ToolButton aria-label='Предварительный просмотр'><PreviewIcon /></ToolButton>
                  <Separator />
                  <ToolButton aria-label='Сохранить'><DiskIcon /></ToolButton>
                  <Separator />
                  <ToolButton><MailIcon />Отправить...</ToolButton>
                </Toolbar>
                <Report />
              </ReportPane>
              <Settings />
            </Body>
          </Content>
        </Client>
        <StatusBar>
          <HistoryButton>История...</HistoryButton>
          <StatusLink href='#'><NoteIcon />Обновить курсы валют</StatusLink>
        </StatusBar>
      </Window>
      <WindowsTaskbar />
    </Page>
  )
}
